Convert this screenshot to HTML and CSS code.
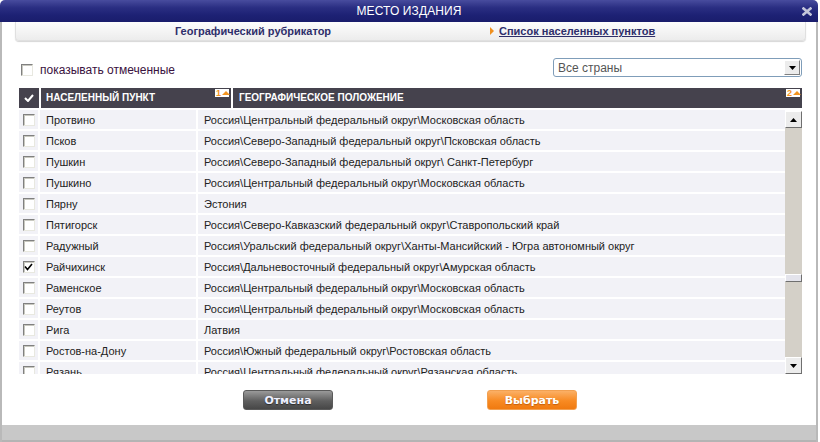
FILE: index.html
```html
<!DOCTYPE html>
<html>
<head>
<meta charset="utf-8">
<link rel="stylesheet" href="styles.css">
</head>
<body>
<div class="win">
  <div class="title">
    <span class="title-text">МЕСТО ИЗДАНИЯ</span>
    <svg class="close" width="10" height="9" viewBox="0 0 10 9"><path d="M1.5 1.5 L8.5 7.5 M8.5 1.5 L1.5 7.5" stroke="#c4c6da" stroke-width="2.6" stroke-linecap="square"/></svg>
  </div>
  <div class="panel">
    <div class="tabs">
      <div class="tab first">Географический рубрикатор</div>
      <div class="tab active"><span class="tri"></span><a>Список населенных пунктов</a></div>
    </div>
    <div class="filters">
      <label class="show"><span class="cb"></span>показывать отмеченные</label>
      <div class="select"><span>Все страны</span><span class="sel-btn"><svg width="7" height="4" viewBox="0 0 7 4"><path d="M0 0H7L3.5 4Z" fill="#000"/></svg></span></div>
    </div>
    <div class="grid">
      <div class="head">
        <div class="h h-check"><svg width="10" height="8" viewBox="0 0 10 8"><path d="M1 4 L4 7 L9 1" stroke="#fff" stroke-width="2" fill="none"/></svg></div>
        <div class="h h-name">НАСЕЛЕННЫЙ ПУНКТ<span class="sort">1<i></i></span></div>
        <div class="h h-geo">ГЕОГРАФИЧЕСКОЕ ПОЛОЖЕНИЕ<span class="sort">2<i></i></span></div>
      </div>
      <div class="bodywrap">
        <div class="list">
          <div class="row"><div class="c"><span class="cb"></span></div><div class="n">Протвино</div><div class="g">Россия\Центральный федеральный округ\Московская область</div></div>
          <div class="row"><div class="c"><span class="cb"></span></div><div class="n">Псков</div><div class="g">Россия\Северо-Западный федеральный округ\Псковская область</div></div>
          <div class="row"><div class="c"><span class="cb"></span></div><div class="n">Пушкин</div><div class="g">Россия\Северо-Западный федеральный округ\ Санкт-Петербург</div></div>
          <div class="row"><div class="c"><span class="cb"></span></div><div class="n">Пушкино</div><div class="g">Россия\Центральный федеральный округ\Московская область</div></div>
          <div class="row"><div class="c"><span class="cb"></span></div><div class="n">Пярну</div><div class="g">Эстония</div></div>
          <div class="row"><div class="c"><span class="cb"></span></div><div class="n">Пятигорск</div><div class="g">Россия\Северо-Кавказский федеральный округ\Ставропольский край</div></div>
          <div class="row"><div class="c"><span class="cb"></span></div><div class="n">Радужный</div><div class="g">Россия\Уральский федеральный округ\Ханты-Мансийский - Югра автономный округ</div></div>
          <div class="row"><div class="c"><span class="cb checked"><svg width="9" height="8" viewBox="0 0 9 8"><path d="M1 3.5 L3.5 6.5 L8 1" stroke="#000" stroke-width="1.6" fill="none"/></svg></span></div><div class="n">Райчихинск</div><div class="g">Россия\Дальневосточный федеральный округ\Амурская область</div></div>
          <div class="row"><div class="c"><span class="cb"></span></div><div class="n">Раменское</div><div class="g">Россия\Центральный федеральный округ\Московская область</div></div>
          <div class="row"><div class="c"><span class="cb"></span></div><div class="n">Реутов</div><div class="g">Россия\Центральный федеральный округ\Московская область</div></div>
          <div class="row"><div class="c"><span class="cb"></span></div><div class="n">Рига</div><div class="g">Латвия</div></div>
          <div class="row"><div class="c"><span class="cb"></span></div><div class="n">Ростов-на-Дону</div><div class="g">Россия\Южный федеральный округ\Ростовская область</div></div>
          <div class="row"><div class="c"><span class="cb"></span></div><div class="n">Рязань</div><div class="g">Россия\Центральный федеральный округ\Рязанская область</div></div>
        </div>
        <div class="scroll">
          <div class="sb-btn"><svg width="7" height="4" viewBox="0 0 7 4"><path d="M0 4H7L3.5 0Z" fill="#000"/></svg></div>
          <div class="track"><div class="thumb"></div></div>
          <div class="sb-btn"><svg width="7" height="4" viewBox="0 0 7 4"><path d="M0 0H7L3.5 4Z" fill="#000"/></svg></div>
        </div>
      </div>
    </div>
    <div class="buttons">
      <div class="btn cancel">Отмена</div>
      <div class="btn ok">Выбрать</div>
    </div>
    <div class="footer"></div>
  </div>
</div>
</body>
</html>
```
FILE: styles.css
```css
html, body {
  margin: 0;
  padding: 0;
  background: #fff;
}
body {
  width: 820px;
  height: 442px;
  overflow: hidden;
  font-family: "Liberation Sans", Arial, sans-serif;
}
.win {
  width: 818px;
}
.title {
  height: 22px;
  background: linear-gradient(#484c9e 0%, #2a2e82 35%, #1d2174 70%, #1a1d6c 100%);
  border-radius: 5px 5px 0 0;
  display: flex;
  align-items: center;
  justify-content: center;
  position: relative;
}
.title-text {
  color: #fff;
  font-size: 12px;
  letter-spacing: 0.1px;
}
.close {
  position: absolute;
  right: 6px;
  top: 7px;
}
.panel {
  border-left: 2px solid #b9b9b9;
  border-right: 2px solid #b9b9b9;
  height: 420px;
  display: flex;
  flex-direction: column;
}
.tabs {
  margin: 0 10px 0 13px;
  height: 18px;
  display: flex;
  background: linear-gradient(#fdfdfd, #ececec);
  border: 1px solid #e0e0e0;
  border-top: none;
  border-radius: 0 0 4px 4px;
  box-shadow: 0 1px 1px #d6d6d6;
}
.tab {
  display: flex;
  align-items: center;
  font-size: 11px;
  font-weight: bold;
  color: #2e2e6a;
}
.tab.first {
  width: 474px;
  justify-content: center;
}
.tab.active {
  flex: 1;
  padding-left: 0;
}
.tab a {
  text-decoration: underline;
  color: #2e2e6a;
}
.tri {
  width: 0;
  height: 0;
  border-left: 4px solid #f0901e;
  border-top: 4px solid transparent;
  border-bottom: 4px solid transparent;
  margin-right: 5px;
}
.filters {
  margin: 17px 14px 0 17px;
  height: 19px;
  display: flex;
  justify-content: space-between;
  align-items: center;
}
.show {
  display: flex;
  align-items: center;
  font-size: 12px;
  color: #3a1240;
  padding-top: 4px;
}
.show .cb {
  margin: 0 7px 0 2px;
}
.cb {
  width: 12px;
  height: 12px;
  box-sizing: border-box;
  border: 1px solid;
  border-color: #808080 #e8e8e0 #e8e8e0 #808080;
  box-shadow: inset 1px 1px 0 #c8c8c0;
  background: #fff;
  display: inline-flex;
  align-items: center;
  justify-content: center;
}
.select {
  width: 249px;
  height: 19px;
  box-sizing: border-box;
  border: 1px solid #7f9db9;
  border-radius: 3px;
  display: flex;
  align-items: center;
  justify-content: space-between;
  font-size: 12px;
  color: #555;
  padding-left: 4px;
  background: #fff;
}
.sel-btn {
  width: 16px;
  height: 15px;
  margin-right: 1px;
  box-sizing: border-box;
  background: #ececec;
  border: 1px solid;
  border-color: #fff #808080 #808080 #fff;
  display: flex;
  align-items: center;
  justify-content: center;
}
.grid {
  margin: 11px 0 0 17px;
  width: 783px;
}
.head {
  display: grid;
  grid-template-columns: 20px 190px 569px;
  column-gap: 2px;
  height: 20px;
}
.h {
  background: #45424d;
  color: #fff;
  font-size: 10px;
  font-weight: bold;
  line-height: 20px;
  position: relative;
  white-space: nowrap;
}
.h-check {
  display: flex;
  align-items: center;
  justify-content: center;
}
.h-name { padding-left: 5px; }
.h-geo { padding-left: 6px; }
.sort {
  position: absolute;
  right: 2px;
  top: 1px;
  height: 8px;
  width: 14px;
  background: #fff;
  color: #f39420;
  font-size: 9px;
  line-height: 8px;
  font-weight: bold;
  display: flex;
  align-items: center;
  padding-left: 1px;
  box-sizing: border-box;
}
.sort i {
  display: block;
  width: 0;
  height: 0;
  margin-left: 1px;
  border-bottom: 4px solid #f39420;
  border-left: 4px solid transparent;
  border-right: 4px solid transparent;
}
.bodywrap {
  margin-top: 2px;
  display: flex;
  height: 264px;
}
.list {
  width: 767px;
  height: 264px;
  overflow: hidden;
  display: flex;
  flex-direction: column;
  gap: 2px;
}
.row {
  display: grid;
  grid-template-columns: 19px 156px 587px;
  column-gap: 2px;
  height: 19px;
  flex-shrink: 0;
}
.row > div {
  background: #f2f2f7;
  font-size: 11px;
  color: #222;
  line-height: 20px;
  white-space: nowrap;
  overflow: hidden;
}
.row .c {
  display: flex;
  align-items: center;
  justify-content: center;
}
.row .n, .row .g { padding-left: 6px; }
.scroll {
  width: 17px;
  height: 263px;
  margin-top: 1px;
  background: #d4d0c8;
  display: flex;
  flex-direction: column;
}
.sb-btn {
  width: 17px;
  height: 17px;
  box-sizing: border-box;
  background: #ececec;
  border: 1px solid;
  border-color: #fff #6f6f6f #6f6f6f #fff;
  display: flex;
  align-items: center;
  justify-content: center;
}
.track {
  flex: 1;
  position: relative;
}
.thumb {
  position: absolute;
  left: 0;
  top: 146px;
  width: 17px;
  height: 8px;
  box-sizing: border-box;
  background: #e4e4ec;
  border: 1px solid;
  border-color: #fff #6f6f6f #6f6f6f #fff;
}
.buttons {
  margin-top: 16px;
  display: flex;
  padding-left: 241px;
  gap: 154px;
}
.btn {
  width: 90px;
  height: 20px;
  box-sizing: border-box;
  border-radius: 3px;
  font-family: "DejaVu Sans", Verdana, sans-serif;
  font-weight: bold;
  font-size: 11px;
  color: #fff;
  display: flex;
  align-items: center;
  justify-content: center;
  text-shadow: 0 1px 1px rgba(0,0,0,0.5);
}
.cancel {
  background: linear-gradient(#9a9a9a, #5f5f5f 55%, #474747);
  border: 1px solid #5a5a5a;
  color: #eef0ff;
}
.ok {
  background: linear-gradient(#fbb066, #f88a22 55%, #f07a10);
  border: 1px solid #f2a050;
  text-shadow: 0 1px 1px rgba(150,60,0,0.5);
}
.footer {
  margin-top: 15px;
  height: 15px;
  background: #c8c8c8;
  border-bottom: 2px solid #b4b4b4;
}
```
